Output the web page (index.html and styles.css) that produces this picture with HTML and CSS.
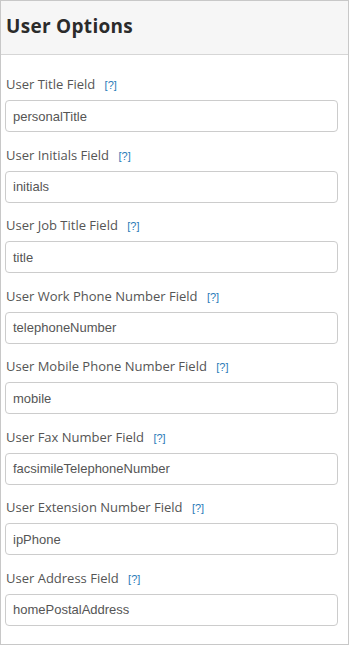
FILE: index.html
```html
<!DOCTYPE html>
<html>
<head>
<meta charset="utf-8">
<link rel="stylesheet" href="styles.css">
</head>
<body>
<div class="panel">
  <div class="panel-head"><h2 class="title">User Options</h2></div>
  <div class="panel-body">
    <div class="field"><label class="lbl">User Title Field <a class="help">[?]</a></label><div class="input">personalTitle</div></div>
    <div class="field"><label class="lbl">User Initials Field <a class="help">[?]</a></label><div class="input">initials</div></div>
    <div class="field"><label class="lbl">User Job Title Field <a class="help">[?]</a></label><div class="input">title</div></div>
    <div class="field"><label class="lbl">User Work Phone Number Field <a class="help">[?]</a></label><div class="input">telephoneNumber</div></div>
    <div class="field"><label class="lbl">User Mobile Phone Number Field <a class="help">[?]</a></label><div class="input">mobile</div></div>
    <div class="field"><label class="lbl">User Fax Number Field <a class="help">[?]</a></label><div class="input">facsimileTelephoneNumber</div></div>
    <div class="field"><label class="lbl">User Extension Number Field <a class="help">[?]</a></label><div class="input">ipPhone</div></div>
    <div class="field"><label class="lbl">User Address Field <a class="help">[?]</a></label><div class="input">homePostalAddress</div></div>
  </div>
</div>
</body>
</html>
```
FILE: styles.css
```css
html, body { margin: 0; padding: 0; background: #fff; }
.panel {
  width: 349px;
  height: 645px;
  box-sizing: border-box;
  border: 1px solid #c8c8c8;
  background: #fff;
}
.panel-head {
  height: 54px;
  box-sizing: border-box;
  background: #f6f6f6;
  border-bottom: 1px solid #d6d6d6;
  display: flex;
  align-items: center;
  padding: 0 0 4px 5px;
}
.title {
  margin: 0;
  font-family: "Open Sans", sans-serif;
  font-weight: 700;
  font-size: 19px;
  color: #2b2b2b;
  letter-spacing: 0.3px;
  line-height: 24px;
}
.panel-body {
  padding: 22px 10px 0 4px;
  display: flex;
  flex-direction: column;
  gap: 15.57px;
}
.field { display: flex; flex-direction: column; gap: 9px; }
.lbl {
  display: block;
  height: 14px;
  font-family: "Open Sans", sans-serif;
  font-size: 13px;
  color: #555;
  padding-left: 1px;
  line-height: 14px;
}
.help {
  font-family: "Liberation Sans", sans-serif;
  font-size: 11px;
  line-height: 1;
  color: #2a7ab8;
  margin-left: 6px;
}
.input {
  height: 32px;
  box-sizing: border-box;
  border: 1px solid #ccc;
  border-radius: 4px;
  padding: 0 7px;
  display: flex;
  align-items: center;
  font-family: "Liberation Sans", Arial, sans-serif;
  font-size: 13px;
  color: #555;
}
```
